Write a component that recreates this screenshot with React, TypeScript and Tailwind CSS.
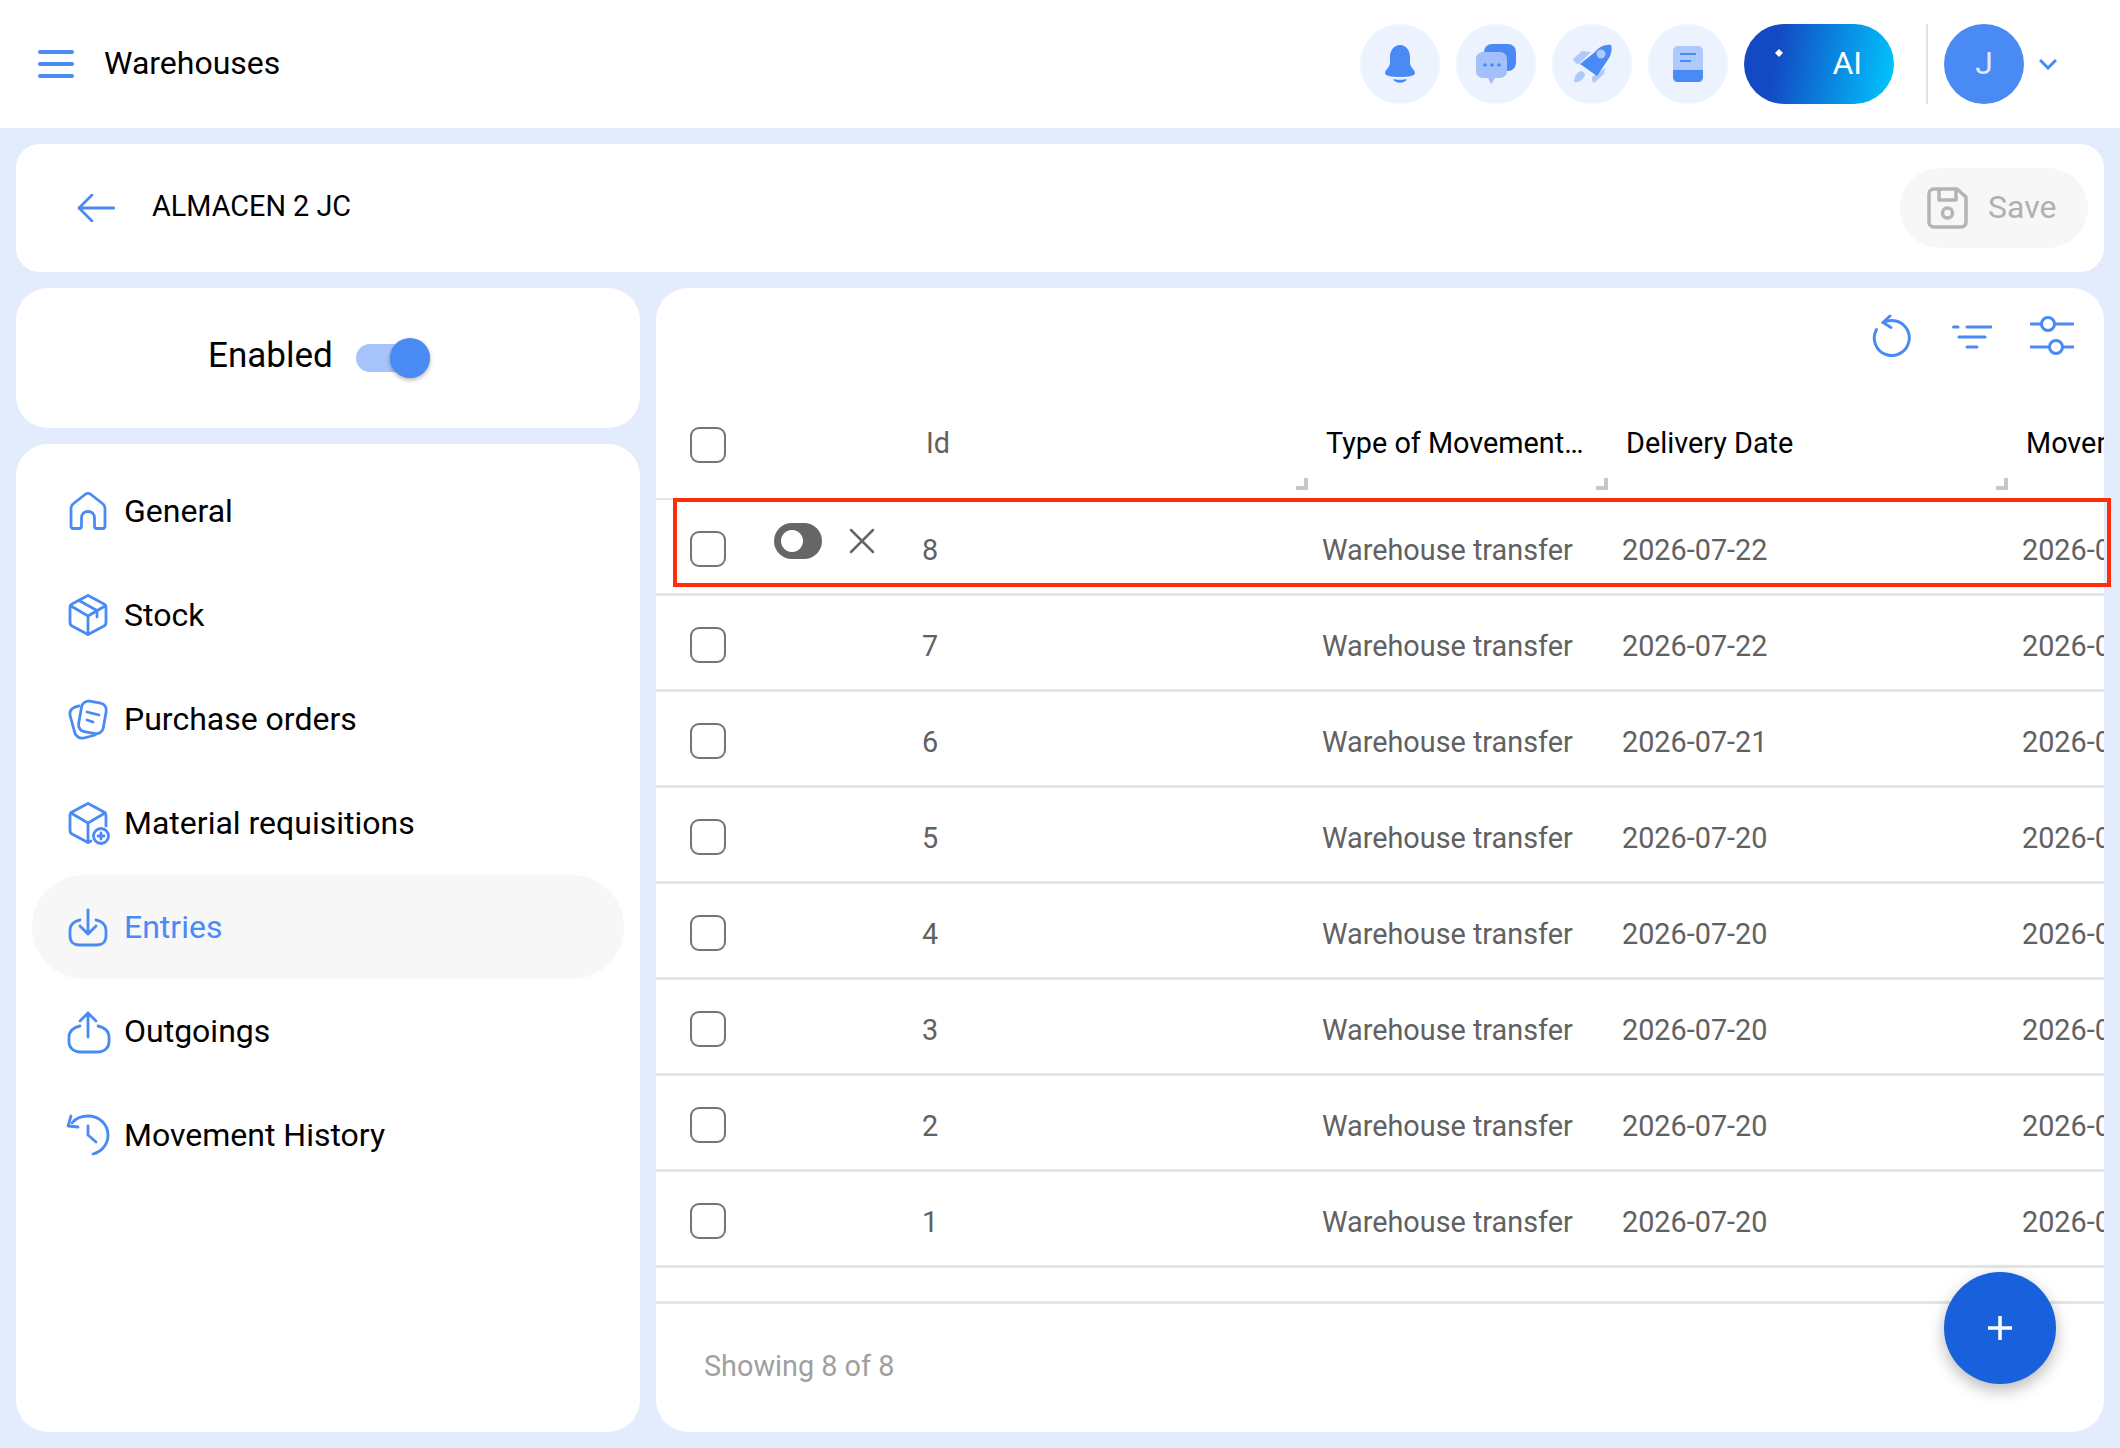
const blue = "#4a8af4"

function IconBell() {
  return (
    <svg width="40" height="40" viewBox="0 0 40 40" fill={blue}>
      <path d="M20 1C14 1 10 6 10 13V19C10 23 5 26 5 29C5 32 12 33 20 33C28 33 35 32 35 29C35 26 30 23 30 19V13C30 6 26 1 20 1Z" />
      <path d="M13 35C17 36 23 36 27 35C25 40 15 40 13 35Z" />
    </svg>
  )
}

function IconChat() {
  return (
    <svg width="40" height="40" viewBox="0 0 40 40">
      <rect x="8" y="0" width="32" height="27" rx="8" fill={blue} />
      <path d="M7 8H24C28 8 31 11 31 15V27C31 31 28 34 24 34H19L16 39C15.5 40 15 40 14.500 39L12 34H7C3 34 0 31 0 27V15C0 11 3 8 7 8Z" fill="#a3c0fb" />
      <circle cx="9" cy="21" r="1.800" fill={blue} />
      <circle cx="16" cy="21" r="1.800" fill={blue} />
      <circle cx="23" cy="21" r="1.800" fill={blue} />
    </svg>
  )
}

function IconRocket() {
  return (
    <svg width="40" height="40" viewBox="0 0 40 40">
      <path d="M1 15L10 7L19 8L7 20C4 20 2 18 1 15Z" fill="#aec9fb" />
      <path d="M33 24L32 30L22 39C20 38 20 35 20 33Z" fill="#aec9fb" />
      <path d="M2 38C2 33 5 28 9 27C13 28 14 31 12 33C10 37 6 39 2 38Z" fill="#aec9fb" />
      <path d="M39 1C33 0 27 3 23 8L8 20L25 32L37 14C40 9 40 4 39 1Z" fill={blue} />
      <circle cx="29" cy="10" r="4.500" fill="#aec9fb" />
    </svg>
  )
}

function IconBook() {
  return (
    <svg width="30" height="36" viewBox="0 0 30 36">
      <path d="M5 0H25C28 0 30 2 30 5V25H0V5C0 2 2 0 5 0Z" fill="#aec9fb" />
      <path d="M0 24H30V31C30 34 28 36 25 36H5C2 36 0 34 0 31Z" fill={blue} />
      <path d="M7 8H23M7 15H18" stroke={blue} strokeWidth="2" />
    </svg>
  )
}

function NavIcon({ name }: { name: string }) {
  const box = (
    <>
      <path d="M21 3L6 11Q4 12 4 15V29Q4 32 6 33L21 41Q22 42 23 41L38 33Q40 32 40 29V15Q40 12 38 11L23 3Q22 2 21 3Z" />
      <path d="M5 13L22 23L39 13M22 23V41" />
    </>
  )
  return (
    <svg width="44" height="44" viewBox="0 0 44 44" fill="none" stroke={blue} strokeWidth="2.800" strokeLinecap="round" strokeLinejoin="round" className="overflow-visible shrink-0">
      {name === "home" && (
        <path d="M5 19C5 17 6 16 7 15L19 5.500C21 4 23 4 25 5.500L37 15C38 16 39 17 39 19V37C39 38.500 38 39.500 36.500 39.500H31C29.500 39.500 28.500 38.500 28.500 37V29C28.500 25 26 22.500 22 22.500C18 22.500 15.500 25 15.500 29V37C15.500 38.500 14.500 39.500 13 39.500H7.500C6 39.500 5 38.500 5 37Z" />
      )}
      {name === "stock" && (
        <>
          {box}
          <path d="M13 7.500L31 17.500V24" />
        </>
      )}
      {name === "orders" && (
        <>
          <rect x="14" y="5" width="25" height="31" rx="7" transform="rotate(10 27 20)" />
          <path d="M13 9C7 10 3 13 4 18L8 33C9 39 13 42 18 41L29 38" />
          <path d="M21 15L33 18M21 23L27 25" />
        </>
      )}
      {name === "requisition" && (
        <>
          <path d="M25 40L23 41Q22 42 21 41L6 33Q4 32 4 29V15Q4 12 6 11L21 3Q22 2 23 3L38 11Q40 12 40 15V25" />
          <path d="M5 12L22 22L39 12M22 22V40" />
          <circle cx="35" cy="35" r="7.500" />
          <path d="M35 32V38M32 35H38" />
        </>
      )}
      {name === "entries" && (
        <>
          <path d="M14 15C8 16 4 20 4 25V31C4 37 8 40 13 40H31C36 40 40 37 40 31V25C40 20 36 16 30 15" />
          <path d="M22 5V29M14 21L22 29L30 21" />
        </>
      )}
      {name === "outgoings" && (
        <>
          <path d="M14 17C8 18 3 22 3 28V33C3 39 8 43 14 43H32C38 43 43 39 43 33V28C43 22 38 18 32 17" />
          <path d="M22 4V28M14 12L22 4L30 12" />
        </>
      )}
      {name === "history" && (
        <>
          <path d="M6 10C10 5 16 3 22 3C33 3 42 11 42 22C42 32 35 39 27 41" />
          <path d="M5 3L2 13L12 14" />
          <path d="M22 13V22L30 29" />
        </>
      )}
    </svg>
  )
}

const navItems = [
  { label: "General", icon: "home" },
  { label: "Stock", icon: "stock" },
  { label: "Purchase orders", icon: "orders" },
  { label: "Material requisitions", icon: "requisition" },
  { label: "Entries", icon: "entries", active: true },
  { label: "Outgoings", icon: "outgoings" },
  { label: "Movement History", icon: "history" },
]

const rows = [
  { id: 8, date: "2026-07-22" },
  { id: 7, date: "2026-07-22" },
  { id: 6, date: "2026-07-21" },
  { id: 5, date: "2026-07-20" },
  { id: 4, date: "2026-07-20" },
  { id: 3, date: "2026-07-20" },
  { id: 2, date: "2026-07-20" },
  { id: 1, date: "2026-07-20" },
]

function Checkbox() {
  return <div className="w-[36px] h-[36px] rounded-[9px] border-2 border-[#757575] shrink-0"></div>
}

function Handle() {
  return <div className="absolute right-0 bottom-[8px] w-[12px] h-[12px] border-r-[4px] border-b-[4px] border-[#c8c8c8]"></div>
}

export default function App() {
  return (
    <div className="w-[2120px] h-[1448px] flex flex-col bg-[#e3ecfd] font-['Roboto',sans-serif] overflow-hidden">
      {/* top bar */}
      <div className="h-[128px] bg-white flex items-center shrink-0 pl-[38px]">
        <svg width="36" height="28" viewBox="0 0 36 28" stroke={blue} strokeWidth="4" strokeLinecap="round">
          <path d="M2 2H34M2 14H34M2 26H34" />
        </svg>
        <div className="ml-[30px] mb-[2px] text-[32px] text-black">Warehouses</div>
        <div className="ml-auto flex items-center gap-[16px]">
          <div className="w-[80px] h-[80px] rounded-full bg-[#edf3fe] flex items-center justify-center"><IconBell /></div>
          <div className="w-[80px] h-[80px] rounded-full bg-[#edf3fe] flex items-center justify-center"><IconChat /></div>
          <div className="w-[80px] h-[80px] rounded-full bg-[#edf3fe] flex items-center justify-center"><IconRocket /></div>
          <div className="w-[80px] h-[80px] rounded-full bg-[#edf3fe] flex items-center justify-center"><IconBook /></div>
          <div className="w-[150px] h-[80px] rounded-full bg-[linear-gradient(100deg,#1349c3_22%,#00c8ff_100%)] relative flex items-center justify-end pr-[32px] pb-[2px] text-white text-[32px]">
            <svg width="8" height="8" viewBox="0 0 8 8" fill="white" className="absolute left-[31px] top-[25px]">
              <path d="M4 0L8 4L4 8L0 4Z" />
            </svg>
            AI
          </div>
        </div>
        <div className="w-[2px] h-[80px] bg-[#e3e3e3] ml-[32px]"></div>
        <div className="w-[80px] h-[80px] rounded-full bg-[#4a8af4] ml-[16px] flex items-center justify-center pb-[2px] text-[32px] text-[#dfe9fd]">J</div>
        <svg width="18" height="11" viewBox="0 0 18 11" fill="none" stroke={blue} strokeWidth="3" className="ml-[15px] mr-[63px]">
          <path d="M1 1L9 9L17 1" />
        </svg>
      </div>

      <div className="flex-1 flex flex-col gap-[16px] p-[16px] min-h-0 min-w-0">
        {/* title card */}
        <div className="h-[128px] shrink-0 bg-white rounded-[24px] flex items-center pl-[61px] pr-[16px]">
          <svg width="38" height="28" viewBox="0 0 38 28" fill="none" stroke={blue} strokeWidth="2.800" strokeLinecap="round" strokeLinejoin="round">
            <path d="M2 14H37M15 1L2 14L15 27" />
          </svg>
          <div className="ml-[37px] mb-[2px] text-[28.8px] text-black">ALMACEN 2 JC</div>
          <div className="ml-auto w-[188px] h-[80px] rounded-full bg-[#f7f7f7] flex items-center pl-[27px] gap-[20px]">
            <svg width="41" height="42" viewBox="0 0 41 42" fill="none" stroke="#b4b4b4" strokeWidth="3.500" strokeLinejoin="round">
              <path d="M7 2H30L39 10V35C39 38 37 40 34 40H7C4 40 2 38 2 35V7C2 4 4 2 7 2Z" />
              <path d="M12 2V13H29V2" />
              <circle cx="20.500" cy="26" r="5" />
            </svg>
            <span className="text-[32px] text-[#b0b0b0] mb-[2px]">Save</span>
          </div>
        </div>

        <div className="flex-1 flex gap-[16px] min-h-0 min-w-0">
          {/* left column */}
          <div className="w-[624px] shrink-0 flex flex-col gap-[16px]">
            <div className="h-[140px] shrink-0 bg-white rounded-[32px] flex items-center pl-[192px]">
              <span className="text-[35px] text-black mb-[4px]">Enabled</span>
              <div className="relative ml-[23px] w-[74px] h-[28px] rounded-full bg-[#a6c4fa]">
                <div className="absolute right-0 top-[-6px] w-[40px] h-[40px] rounded-full bg-[#4a8af4] shadow-[0_2px_4px_rgba(0,0,0,0.3)]"></div>
              </div>
            </div>
            <div className="flex-1 bg-white rounded-[32px] px-[16px] pt-[15px]">
              {navItems.map((item) => (
                <div key={item.label} className={`h-[104px] rounded-full flex items-center pl-[34px] gap-[14px] text-[32px] ${item.active ? "bg-[#f7f7f7] text-[#4a8af4]" : "text-black"}`}>
                  <NavIcon name={item.icon} />
                  {item.label}
                </div>
              ))}
            </div>
          </div>

          {/* table panel */}
          <div className="w-[1448px] shrink-0 relative">
            <div className="h-full bg-white rounded-[32px] overflow-hidden flex flex-col">
              <div className="h-[105px] shrink-0 flex items-start justify-end">
                <svg width="44" height="44" viewBox="0 0 44 44" fill="none" stroke={blue} strokeWidth="3" strokeLinecap="round" strokeLinejoin="round" className="mt-[25px]">
                  <path d="M11 9.500C14 8 17 7.500 20 7.500A17.500 17.500 0 1 1 4.500 16.500" />
                  <path d="M18 3L11 9.500L19 14.500" />
                </svg>
                <svg width="40" height="26" viewBox="0 0 40 26" fill="none" stroke={blue} strokeWidth="3" strokeLinecap="round" className="ml-[36px] mt-[36px]">
                  <path d="M1.500 3H6M15 3H39M7 13H33M15 23H25" />
                </svg>
                <svg width="44" height="40" viewBox="0 0 44 40" fill="none" stroke={blue} strokeWidth="3" strokeLinecap="round" className="ml-[38px] mr-[30px] mt-[28px]">
                  <circle cx="18" cy="8" r="6.500" />
                  <circle cx="26" cy="31" r="6.500" />
                  <path d="M1 8H11M25 8H43M1 31H19M33 31H43" />
                </svg>
              </div>

              {/* header */}
              <div className="h-[107px] shrink-0 flex text-[28.8px] relative border-b-[2px] border-[#e5e5e5]">
                <div className="w-[252px] shrink-0 pl-[34px] pt-[34px]"><Checkbox /></div>
                <div className="w-[400px] shrink-0 pl-[18px] pt-[29px] relative text-[#616161]">Id<Handle /></div>
                <div className="w-[300px] shrink-0 pl-[18px] pt-[29px] pr-[22px] relative text-black"><div className="truncate">Type of Movement Type</div><Handle /></div>
                <div className="w-[400px] shrink-0 pl-[18px] pt-[29px] relative text-black">Delivery Date<Handle /></div>
                <div className="w-[400px] shrink-0 pl-[18px] pt-[29px] text-black whitespace-nowrap">Movement Date</div>
              </div>

              {rows.map((row) => (
                <div key={row.id} className="h-[96px] shrink-0 flex items-center text-[28.8px] text-[#616161] border-b-[3px] border-[#e5e5e5]">
                  <div className="w-[252px] shrink-0 pl-[34px] pt-[5px] flex items-center">
                    <Checkbox />
                    {row.id === 8 && (
                      <>
                        <div className="ml-[48px] mb-[16px] w-[48px] h-[36px] rounded-full bg-[#666666] relative shrink-0">
                          <div className="absolute left-[7px] top-[7px] w-[22px] h-[22px] rounded-full bg-white"></div>
                        </div>
                        <svg width="26" height="26" viewBox="0 0 26 26" stroke="#666666" strokeWidth="2.500" strokeLinecap="round" className="ml-[27px] mb-[16px] shrink-0">
                          <path d="M2 2L24 24M24 2L2 24" />
                        </svg>
                      </>
                    )}
                  </div>
                  <div className="w-[400px] shrink-0 pl-[14px] pt-[9px]">{row.id}</div>
                  <div className="w-[300px] shrink-0 pl-[14px] pt-[9px]">Warehouse transfer</div>
                  <div className="w-[400px] shrink-0 pl-[14px] pt-[9px]">{row.date}</div>
                  <div className="w-[400px] shrink-0 pl-[14px] pt-[9px]">{row.date}</div>
                </div>
              ))}

              <div className="mt-[33px] flex-1 border-t-[3px] border-[#e5e5e5] pl-[48px] pt-[41px] text-[28.8px] text-[#a0a0a0]">Showing 8 of 8</div>
            </div>

            {/* annotation box */}
            <div className="absolute left-[17px] top-[210px] w-[1438px] h-[89px] border-[4px] border-[#ff2d0a]"></div>

            <div className="absolute right-[48px] bottom-[48px] w-[112px] h-[112px] rounded-full bg-[#1860dc] shadow-[0_6px_16px_rgba(0,0,0,0.28)] flex items-center justify-center">
              <svg width="26" height="26" viewBox="0 0 26 26" stroke="white" strokeWidth="3.500">
                <path d="M13 1V25M1 13H25" />
              </svg>
            </div>
          </div>
        </div>
      </div>
    </div>
  )
}
